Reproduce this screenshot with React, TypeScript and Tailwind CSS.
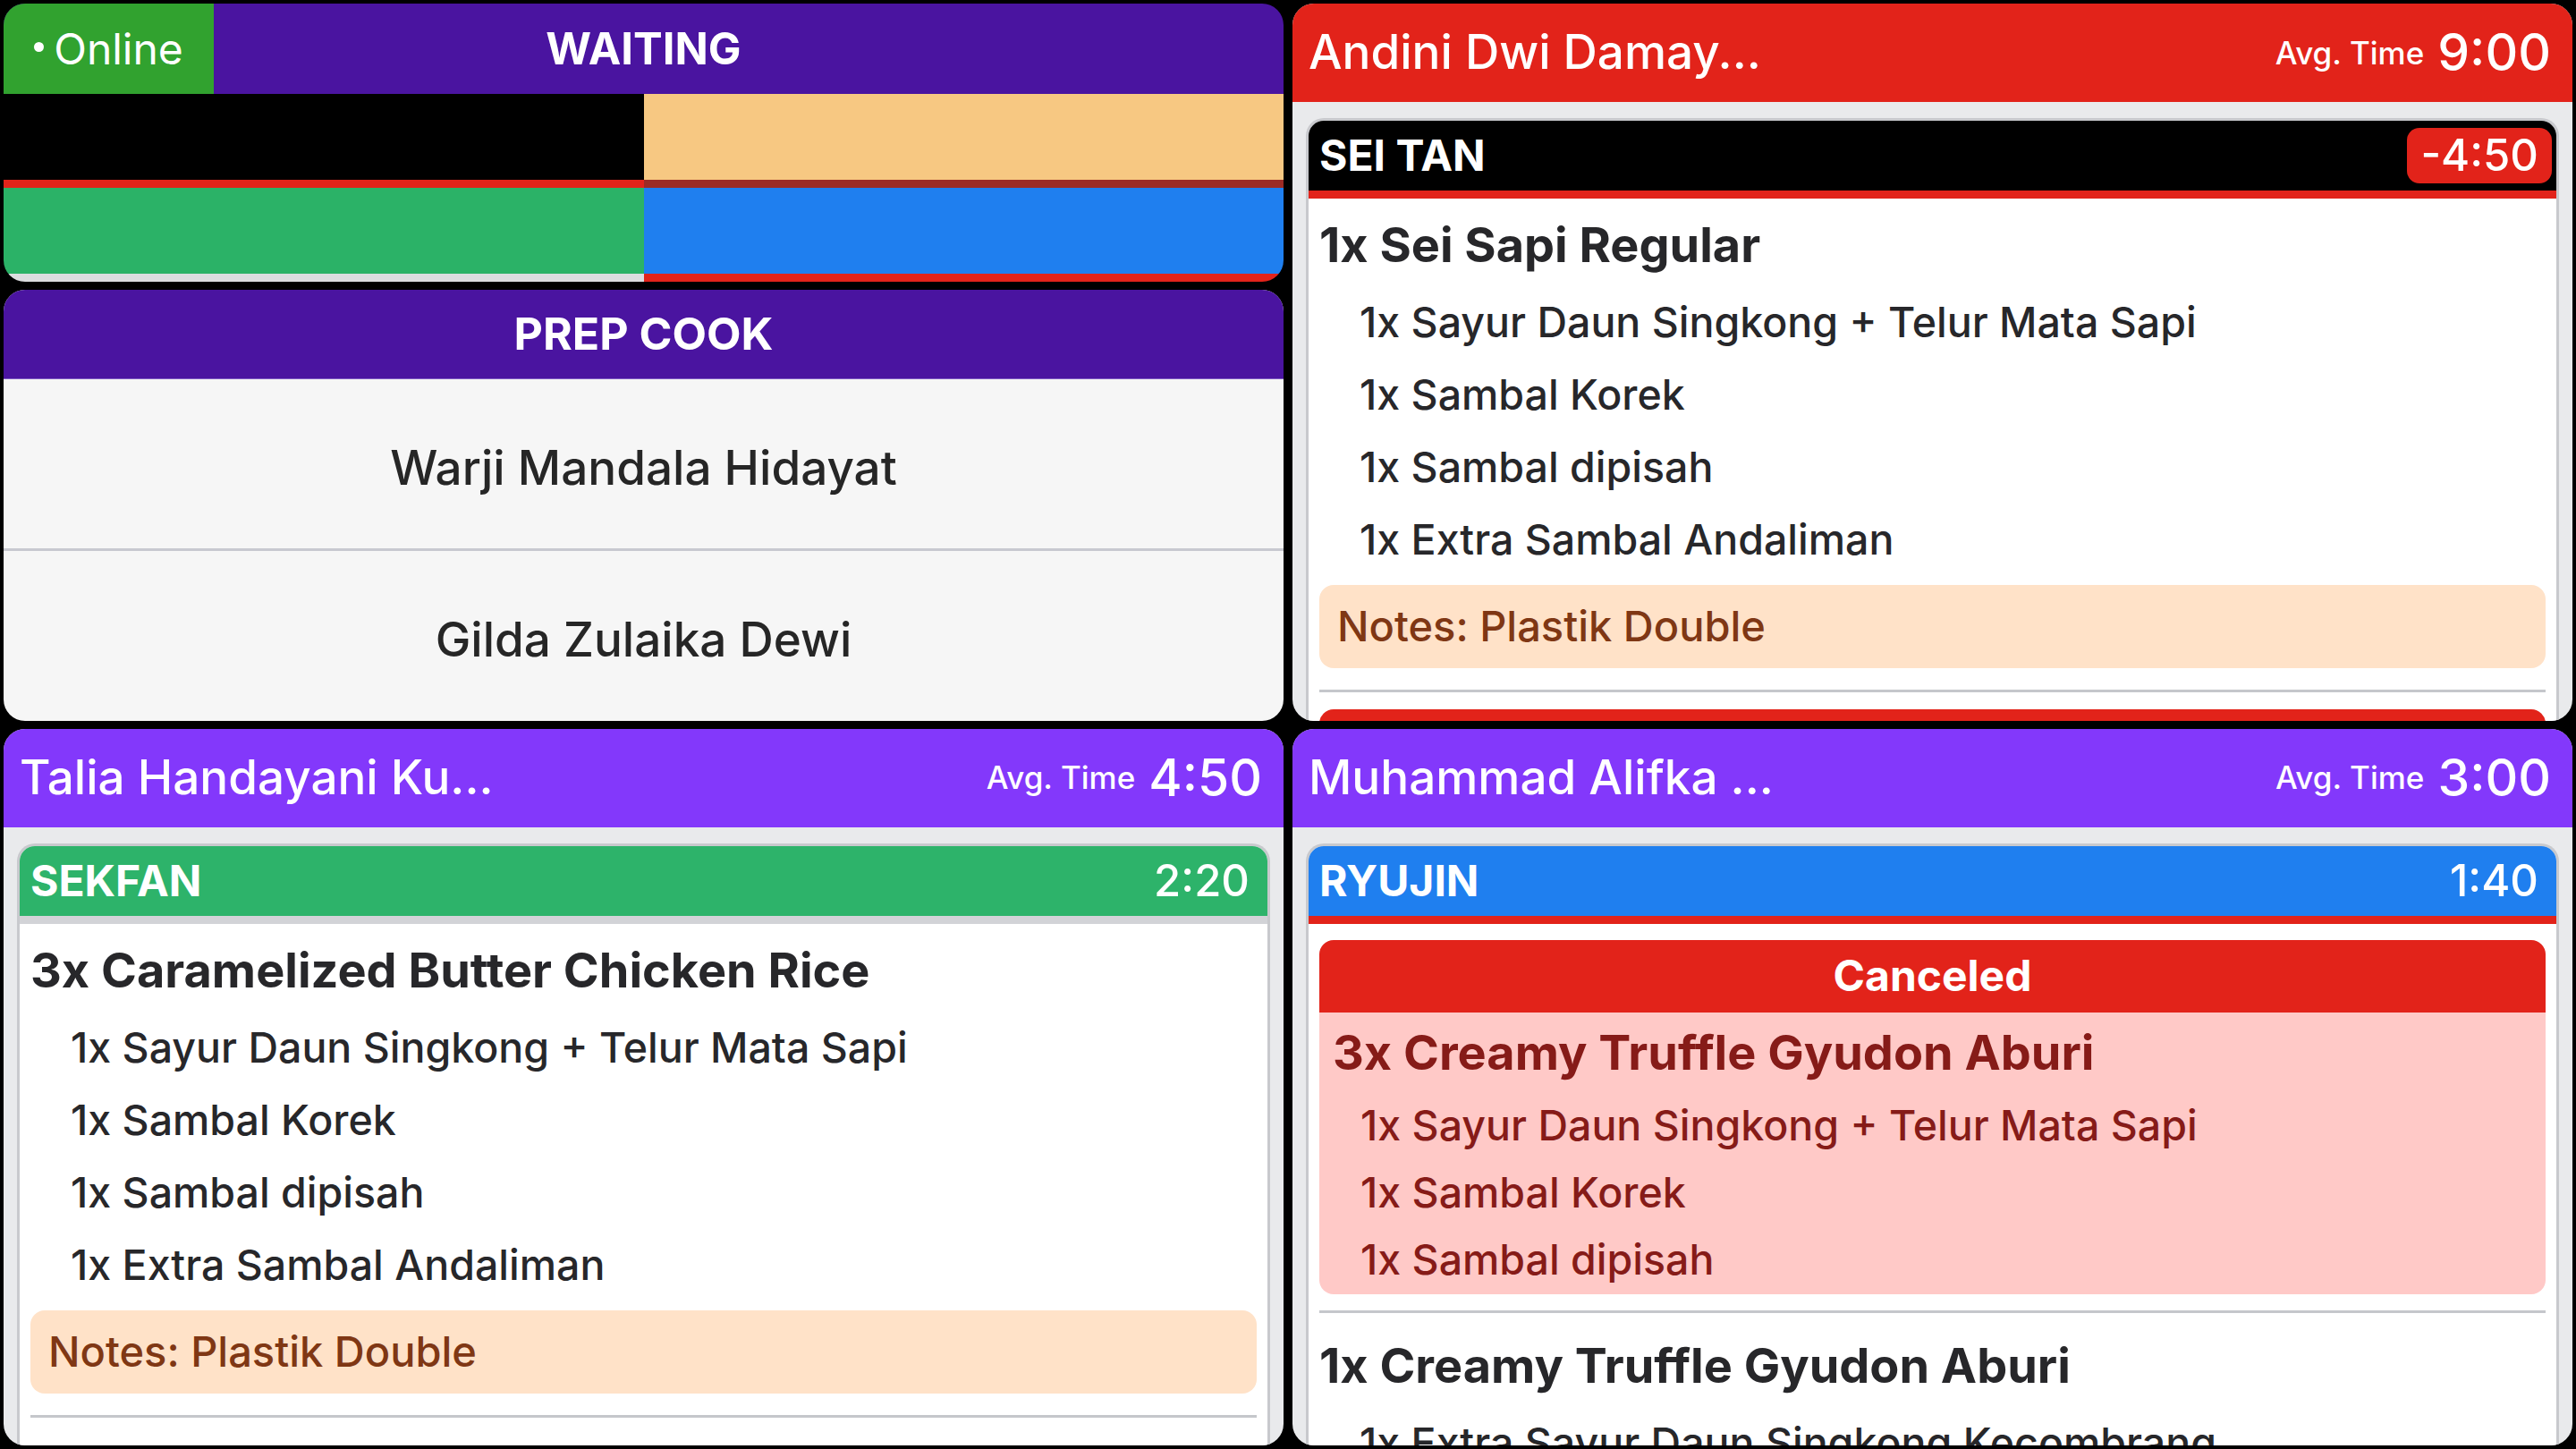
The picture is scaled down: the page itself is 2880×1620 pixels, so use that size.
import React from 'react';

type Mod = string;

const Item = ({ name, mods }: { name: string; mods: Mod[] }) => (
  <div>
    <div className="text-[54px] font-bold leading-[70px] text-[#27272a] whitespace-nowrap">{name}</div>
    <div className="mt-[11px] pl-[45px]">
      {mods.map((m, i) => (
        <div key={i} className="text-[46.5px] font-medium leading-[81px] text-[#27272a] whitespace-nowrap">
          {m}
        </div>
      ))}
    </div>
  </div>
);

const Notes = ({ text }: { text: string }) => (
  <div className="mt-[10px] h-[93px] rounded-[16px] bg-[#ffe2c8] px-[20px] flex items-center text-[47px] font-medium text-[#7f3714] whitespace-nowrap">
    {text}
  </div>
);

const Divider = () => <div className="h-[3px] bg-[#c5c7cb]" />;

const CanceledBlock = ({ name, mods }: { name: string; mods: Mod[] }) => (
  <div className="rounded-[16px] overflow-hidden">
    <div className="h-[81px] bg-[#e2231a] flex items-center justify-center text-[48px] font-bold text-white">
      Canceled
    </div>
    <div className="bg-[#ffc9c7] px-[15px] pt-[10px] pb-[1px]">
      <div className="text-[54px] font-bold leading-[70px] text-[#861b18] whitespace-nowrap">{name}</div>
      <div className="mt-[9px] pl-[31px]">
        {mods.map((m, i) => (
          <div key={i} className="text-[46.5px] font-medium leading-[75px] text-[#861b18] whitespace-nowrap">
            {m}
          </div>
        ))}
      </div>
    </div>
  </div>
);

const Ticket = ({
  name,
  time,
  headerBg,
  stripBg,
  pillBg,
  children,
}: {
  name: string;
  time: string;
  headerBg: string;
  stripBg: string;
  pillBg: string;
  children: React.ReactNode;
}) => (
  <div className="flex-1 min-h-0 overflow-hidden rounded-t-[20px] border-[3px] border-b-0 border-[#c8c9cd] bg-white flex flex-col">
    <div className={`h-[78px] shrink-0 flex items-center justify-between pl-[12px] pr-[5px] ${headerBg}`}>
      <span className="text-[48px] font-bold text-white">{name}</span>
      <span className={`h-[62px] px-[15px] flex items-center rounded-[14px] text-[49px] font-medium text-white ${pillBg}`}>
        {time}
      </span>
    </div>
    <div className={`h-[9px] shrink-0 ${stripBg}`} />
    <div className="px-[12px]">{children}</div>
  </div>
);

const StaffCard = ({
  title,
  avg,
  headerBg,
  children,
}: {
  title: string;
  avg: string;
  headerBg: string;
  children: React.ReactNode;
}) => (
  <div className="h-full flex flex-col rounded-[24px] overflow-hidden bg-[#e9eaec]">
    <div className={`h-[110px] shrink-0 flex items-center justify-between pl-[18px] pr-[24px] ${headerBg}`}>
      <span className="text-[53px] font-medium text-white whitespace-nowrap">{title}</span>
      <div className="flex items-center gap-[15px] text-white">
        <span className="text-[35px] font-medium">Avg. Time</span>
        <span className="text-[57px] font-medium">{avg}</span>
      </div>
    </div>
    <div className="flex-1 min-h-0 flex flex-col px-[15px] pt-[18px] overflow-hidden">{children}</div>
  </div>
);

const MiniCell = ({ top, strip }: { top: string; strip: string }) => (
  <div className="flex flex-col">
    <div className={`h-[96px] ${top}`} />
    <div className={`h-[9px] ${strip}`} />
  </div>
);

const sideMods = [
  '1x Sayur Daun Singkong + Telur Mata Sapi',
  '1x Sambal Korek',
  '1x Sambal dipisah',
  '1x Extra Sambal Andaliman',
];

export default function App() {
  return (
    <div className="w-[2880px] h-[1620px] bg-black p-[4px] grid grid-cols-2 grid-rows-2 gap-x-[10px] gap-y-[9px] font-['Inter',sans-serif] overflow-hidden">
      {/* top left: waiting + prep cook */}
      <div className="flex flex-col gap-[9px] min-h-0">
        <div className="h-[311px] shrink-0 rounded-[24px] overflow-hidden flex flex-col">
          <div className="h-[101px] bg-[#4a14a0] grid grid-cols-[235px_1fr_235px]">
            <div className="bg-[#31a22f] flex items-center justify-center gap-[11px]">
              <span className="w-[11px] h-[11px] rounded-full bg-white -mt-[5px]" />
              <span className="text-[48px] text-white">Online</span>
            </div>
            <div className="flex items-center justify-center text-[49px] font-bold text-white">WAITING</div>
            <div />
          </div>
          <div className="grid grid-cols-2">
            <MiniCell top="bg-black" strip="bg-[#e2231a]" />
            <MiniCell top="bg-[#f7c882]" strip="bg-[#9c2b25]" />
            <MiniCell top="bg-[#2bb267]" strip="bg-[#dcdde0]" />
            <MiniCell top="bg-[#1f7fef]" strip="bg-[#e2231a]" />
          </div>
        </div>
        <div className="flex-1 min-h-0 rounded-[24px] overflow-hidden flex flex-col bg-[#f6f6f6]">
          <div className="h-[100px] shrink-0 bg-[#4a14a0] border-b border-[#7d5cc4] flex items-center justify-center text-[50px] font-bold text-white">
            PREP COOK
          </div>
          <div className="flex-1 pt-[10px] flex items-center justify-center text-[53px] font-medium text-[#262626]">
            Warji Mandala Hidayat
          </div>
          <div className="h-[3px] bg-[#c8c9d0]" />
          <div className="flex-1 pt-[10px] flex items-center justify-center text-[53px] font-medium text-[#262626]">
            Gilda Zulaika Dewi
          </div>
        </div>
      </div>

      {/* top right */}
      <StaffCard title="Andini Dwi Damay..." avg="9:00" headerBg="bg-[#e2231a]">
        <Ticket name="SEI TAN" time="-4:50" headerBg="bg-black" stripBg="bg-[#e2231a]" pillBg="bg-[#e2231a]">
          <div className="pt-[17px]">
            <Item name="1x Sei Sapi Regular" mods={sideMods} />
            <Notes text="Notes: Plastik Double" />
            <div className="mt-[24px]">
              <Divider />
            </div>
            {/* next order block, only its top edge is visible */}
            <div className="mt-[19px] h-[81px] rounded-t-[16px] bg-[#e2231a]" />
          </div>
        </Ticket>
      </StaffCard>

      {/* bottom left */}
      <StaffCard title="Talia Handayani Ku..." avg="4:50" headerBg="bg-[#8338fb]">
        <Ticket name="SEKFAN" time="2:20" headerBg="bg-[#2db36a]" stripBg="bg-[#d2d3d7]" pillBg="bg-transparent">
          <div className="pt-[17px]">
            <Item name="3x Caramelized Butter Chicken Rice" mods={sideMods} />
            <Notes text="Notes: Plastik Double" />
            <div className="mt-[24px]">
              <Divider />
            </div>
          </div>
        </Ticket>
      </StaffCard>

      {/* bottom right */}
      <StaffCard title="Muhammad Alifka ..." avg="3:00" headerBg="bg-[#8338fb]">
        <Ticket name="RYUJIN" time="1:40" headerBg="bg-[#1f7fef]" stripBg="bg-[#e2231a]" pillBg="bg-transparent">
          <div className="pt-[18px]">
            <CanceledBlock
              name="3x Creamy Truffle Gyudon Aburi"
              mods={['1x Sayur Daun Singkong + Telur Mata Sapi', '1x Sambal Korek', '1x Sambal dipisah']}
            />
            <div className="mt-[18px]">
              <Divider />
            </div>
            <div className="mt-[24px]">
              <Item name="1x Creamy Truffle Gyudon Aburi" mods={['1x Extra Sayur Daun Singkong Kecombrang']} />
            </div>
          </div>
        </Ticket>
      </StaffCard>
    </div>
  );
}
